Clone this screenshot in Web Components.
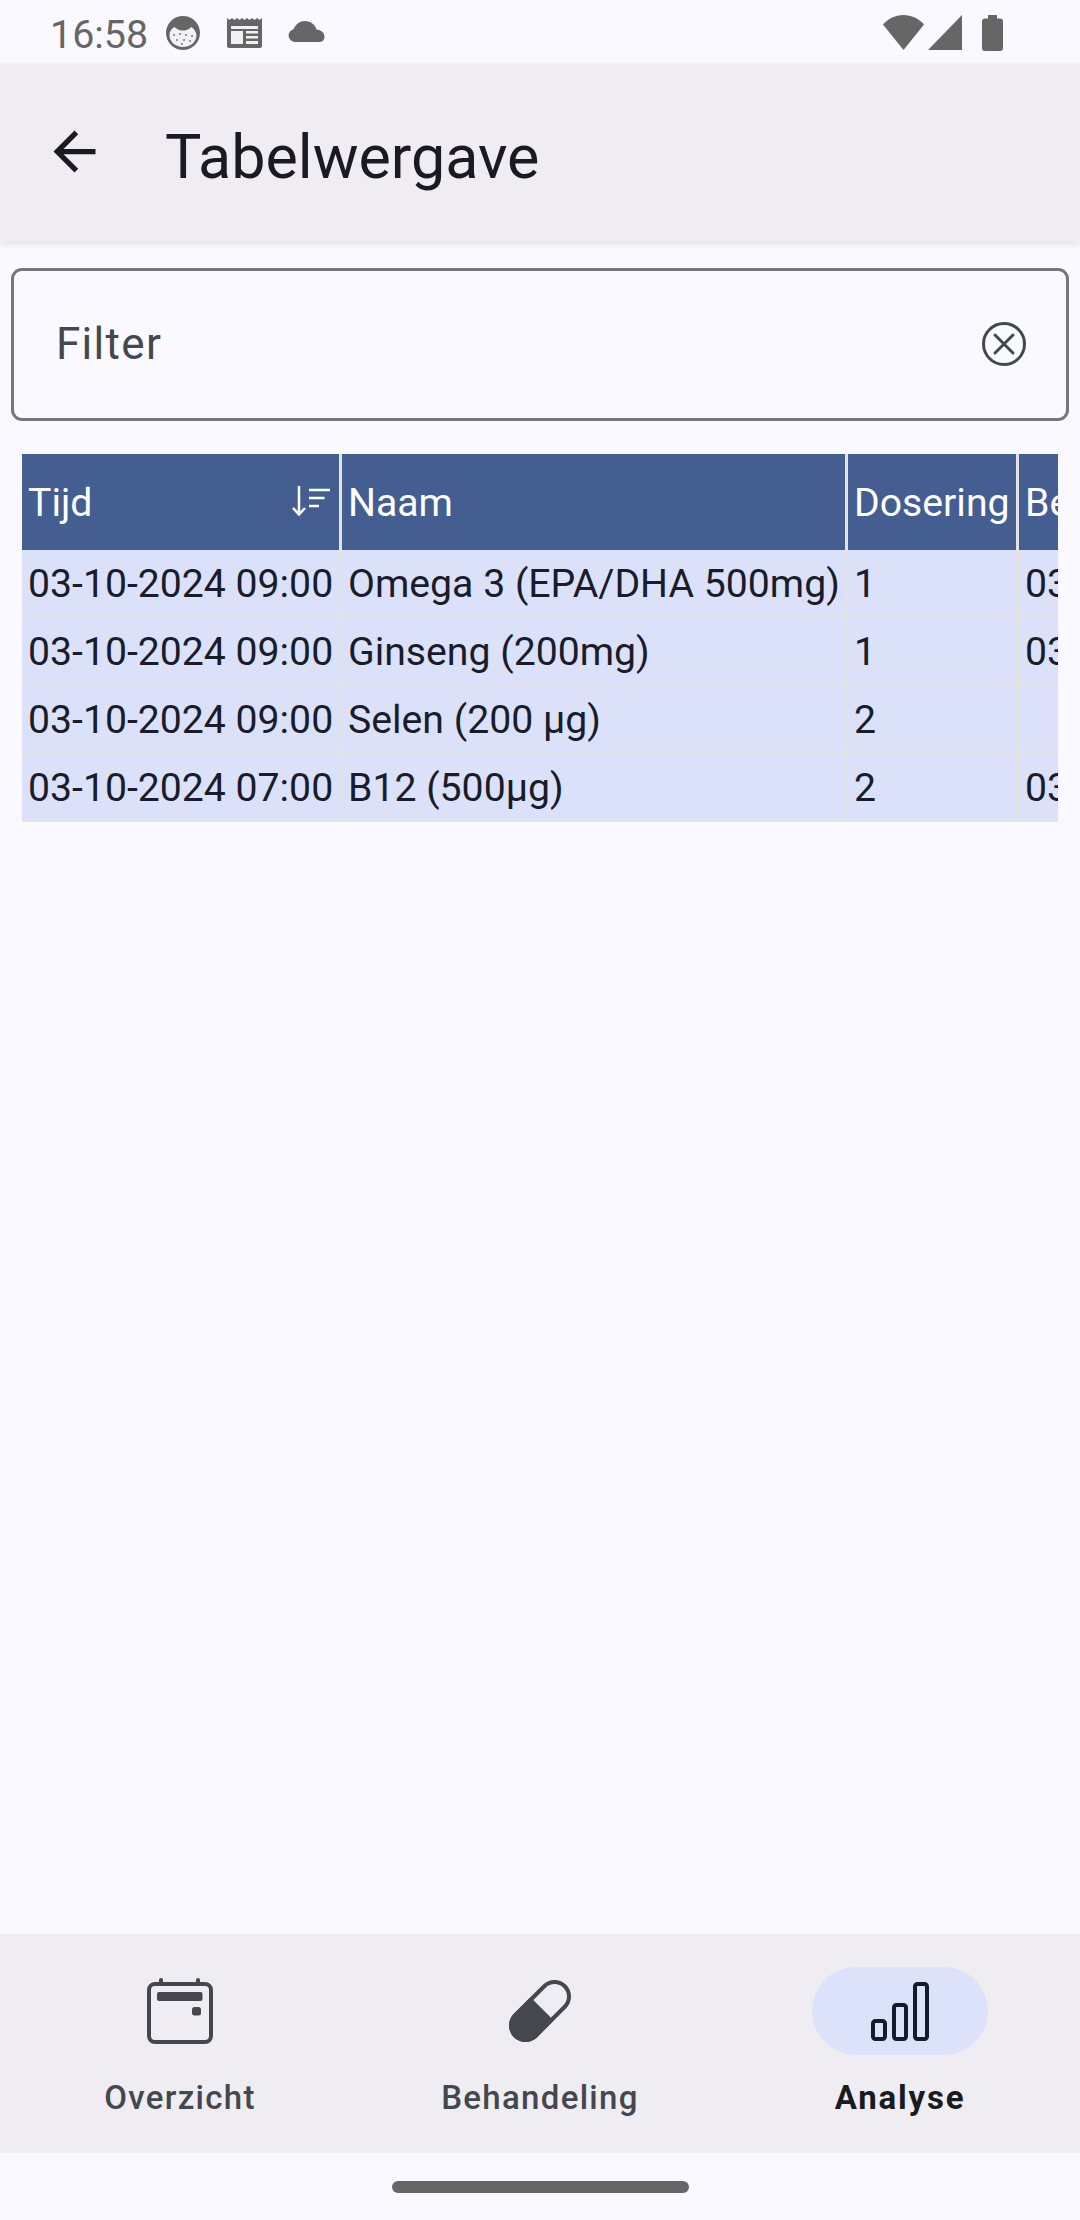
<!DOCTYPE html>
<html lang="nl">
<head>
<meta charset="utf-8">
<title>Tabelwergave</title>
<style>
  html, body { margin: 0; height: 100%; background: #faf9ff; }
  body { font-family: Roboto, "Noto Sans", sans-serif; display: flex; flex-direction: column; height: 2220px; overflow: hidden; }
</style>
</head>
<body>
<status-bar></status-bar>
<app-bar>Tabelwergave</app-bar>
<filter-field>Filter</filter-field>
<data-table></data-table>
<nav-bar>
  <nav-item label="Overzicht" icon="calendar"></nav-item>
  <nav-item label="Behandeling" icon="pill"></nav-item>
  <nav-item label="Analyse" icon="bars" active></nav-item>
</nav-bar>
<gesture-bar></gesture-bar>

<script>
class StatusBar extends HTMLElement {
  constructor () {
    super()
    this.attachShadow({ mode: 'open' })
  }

  connectedCallback () {
    this.shadowRoot.innerHTML = /* html */`
    <style>
      :host {
        display: flex;
        align-items: center;
        height: 65px;
        padding: 0 77px 0 50px;
        color: #666;
        box-sizing: border-box;
        flex: none;
      }
      .time { font-size: 39.400px; line-height: 65px; width: 116px; margin-top: 4px; }
      svg { display: block; fill: #666; flex: none; }
      .right { margin-left: auto; display: flex; align-items: center; }
    </style>
    <span class="time">16:58</span>
    <svg width="34" height="34" viewBox="0 0 34 34">
      <circle cx="17" cy="17" r="17"/>
      <path d="M3.500 19c0-3 1.500-6 4.500-8l2.500 1.500c2 1.500 4 2 6.500 2s4.500-.5 6.500-2L25.500 11c3 2 4.500 5 5 8 0 7-6 12-13.500 12S3.500 26 3.500 19z" fill="#f2f1f6"/>
      <g fill="#777"><circle cx="8" cy="19" r="1"/><circle cx="14" cy="18" r="1"/><circle cx="20" cy="19" r="1"/><circle cx="26" cy="20" r="1"/><circle cx="11" cy="24" r="1"/><circle cx="18" cy="24" r="1"/><circle cx="24" cy="25" r="1"/><circle cx="16" cy="28" r="1"/></g>
    </svg>
    <svg width="35" height="32" viewBox="0 0 35 32" style="margin-left:27px">
      <path d="M0 1l2.500 2L5 1l2.500 2L10 1l2.500 2L15 1l2.500 2L20 1l2.500 2L25 1l2.500 2L30 1l2.500 2L35 1v28a2 2 0 0 1-2 2H2a2 2 0 0 1-2-2z"/>
      <path d="M4 9h27v3H4zM4 14h12v13H4zM19 14h12v2.500H19zM19 19h12v2.500H19zM19 24h12v3H19z" fill="#f2f1f6"/>
    </svg>
    <svg width="38" height="22" viewBox="0 0 38 22" style="margin-left:25px;margin-top:-2px">
      <path d="M8 21a6.500 6.500 0 0 1-1.500-12.800C8.500 3.500 13 0 18 0c5.500 0 10 3.500 11.500 8.500 4.500.5 8 3 8 7.500 0 3-2.500 5-5.500 5z"/>
    </svg>
    <div class="right">
      <svg width="41" height="35" viewBox="0 0 41 35"><path d="M20.500 35L0 9.500C5.500 3.500 12.500 0 20.500 0S35.500 3.500 41 9.500z"/></svg>
      <svg width="35" height="35" viewBox="0 0 35 35" style="margin-left:4px"><path d="M34 0v35H0z"/></svg>
      <svg width="21" height="36" viewBox="0 0 21 36" style="margin-left:19px"><path d="M6 0h9v3.500h3a3 3 0 0 1 3 3V33a3 3 0 0 1-3 3H3a3 3 0 0 1-3-3V6.500a3 3 0 0 1 3-3h3z"/></svg>
    </div>
    `
  }
}

class AppBar extends HTMLElement {
  constructor () {
    super()
    this.attachShadow({ mode: 'open' })
  }

  connectedCallback () {
    this.shadowRoot.innerHTML = /* html */`
    <style>
      :host {
        display: flex;
        align-items: center;
        flex: none;
        height: 177px;
        background: #efedf2;
        color: #1a1b20;
        box-shadow: 0 -1px 3px rgba(0,0,0,.08), 0 3px 6px rgba(0,0,0,.08);
        position: relative;
      }
      svg { margin: 0 0 4px 43px; fill: #1a1b20; display: block; flex: none; }
      .title { margin: 7px 0 0 59px; font-size: 61px; line-height: 74px; }
    </style>
    <svg width="63" height="63" viewBox="0 0 24 24"><path d="M20 11H7.830l5.590-5.590L12 4l-8 8 8 8 1.410-1.410L7.830 13H20z"/></svg>
    <span class="title"><slot></slot></span>
    `
  }
}

class FilterField extends HTMLElement {
  constructor () {
    super()
    this.attachShadow({ mode: 'open' })
  }

  connectedCallback () {
    this.shadowRoot.innerHTML = /* html */`
    <style>
      :host {
        display: flex;
        align-items: center;
        flex: none;
        box-sizing: border-box;
        height: 153px;
        margin: 26px 11px 0;
        padding: 0 40px 0 42px;
        border: 3px solid #74777f;
        border-radius: 11px;
        color: #44474e;
        font-size: 44px;
        letter-spacing: 1.300px;
      }
      span { flex: 1; margin-bottom: 1px; }
      svg { display: block; flex: none; margin-bottom: 2px; }
    </style>
    <span><slot></slot></span>
    <svg width="44" height="44" viewBox="0 0 44 44" fill="none" stroke="#44474e" stroke-width="3">
      <circle cx="22" cy="22" r="20.500"/>
      <path d="M13 13l18 18M31 13L13 31" stroke-linecap="round"/>
    </svg>
    `
  }
}

const rows = [
  ['03-10-2024 09:00', 'Omega 3 (EPA/DHA 500mg)', '1', '03-10-2024 09:00'],
  ['03-10-2024 09:00', 'Ginseng (200mg)', '1', '03-10-2024 09:00'],
  ['03-10-2024 09:00', 'Selen (200 µg)', '2', ''],
  ['03-10-2024 07:00', 'B12 (500µg)', '2', '03-10-2024 07:00']
]

class DataTable extends HTMLElement {
  constructor () {
    super()
    this.attachShadow({ mode: 'open' })
  }

  connectedCallback () {
    const body = rows.map(r => r.map(c => `<div class="cell">${c}</div>`).join('')).join('')
    this.shadowRoot.innerHTML = /* html */`
    <style>
      :host {
        display: block;
        flex: none;
        margin: 33px 22px 0;
        overflow: hidden;
        font-size: 39.200px;
      }
      .grid {
        display: grid;
        grid-template-columns: 320px 506px 171px 400px;
        grid-template-rows: 96px repeat(4, 68px);
        width: 1397px;
      }
      .head {
        display: flex;
        align-items: center;
        box-sizing: border-box;
        background: #445e91;
        color: #fff;
        padding: 2px 6px 0;
        border-right: 3px solid #e3e3e6;
        position: relative;
      }
      .head svg { position: absolute; right: 8px; top: 32px; }
      .cell {
        box-sizing: border-box;
        background: #dbe1f9;
        color: #181c2b;
        padding: 2px 6px 0;
        line-height: 65px;
        border-right: 3px solid #e3e3e6;
        border-bottom: 3px solid #e3e3e6;
        white-space: nowrap;
      }
    </style>
    <div class="grid">
      <div class="head">Tijd
        <svg width="40" height="30" viewBox="0 0 40 30" fill="none" stroke="#fff" stroke-width="2.500">
          <path d="M8 0v28M2 22l6 6.500 6-6.500M18 4h21M18 12h15.500M18 20h10"/>
        </svg>
      </div>
      <div class="head">Naam</div>
      <div class="head">Dosering</div>
      <div class="head">Bewerkt</div>
      ${body}
    </div>
    `
  }
}

const navIcons = {
  calendar: `<svg width="66" height="66" viewBox="0 0 66 66" fill="none">
      <path d="M14 6V2M51 6V2" stroke="#44474e" stroke-width="4" stroke-linecap="round"/>
      <rect x="2" y="6" width="62" height="58" rx="6" stroke="#44474e" stroke-width="4"/>
      <rect x="10" y="14" width="45.500" height="9" rx="2" fill="#44474e"/>
      <rect x="45" y="29" width="9" height="8.500" rx="2.500" fill="#44474e"/>
    </svg>`,
  pill: `<svg width="66" height="66" viewBox="0 0 66 66">
      <g transform="rotate(45 33 33)">
        <rect x="18.500" y="-2" width="29" height="70" rx="14.500" fill="none" stroke="#44474e" stroke-width="4"/>
        <path d="M16.500 30h33v23.500a16.500 16.500 0 0 1-33 0z" fill="#44474e"/>
      </g>
    </svg>`,
  bars: `<svg width="60" height="59" viewBox="0 0 60 59" fill="none" stroke="#131c2b" stroke-width="4">
      <rect x="3" y="39" width="12" height="18" rx="2.500"/>
      <rect x="24" y="23" width="12" height="34" rx="2.500"/>
      <rect x="45" y="2" width="12" height="55" rx="2.500"/>
    </svg>`
}

class NavBar extends HTMLElement {
  constructor () {
    super()
    this.attachShadow({ mode: 'open' })
  }

  connectedCallback () {
    this.shadowRoot.innerHTML = /* html */`
    <style>
      :host {
        display: grid;
        grid-template-columns: repeat(3, 1fr);
        flex: none;
        height: 219px;
        margin-top: auto;
        background: #efedf2;
      }
    </style>
    <slot></slot>
    `
  }
}

class NavItem extends HTMLElement {
  constructor () {
    super()
    this.attachShadow({ mode: 'open' })
  }

  connectedCallback () {
    const active = this.hasAttribute('active')
    this.shadowRoot.innerHTML = /* html */`
    <style>
      :host {
        display: flex;
        flex-direction: column;
        align-items: center;
        padding-top: 33px;
        color: ${active ? '#1a1b20' : '#44474e'};
      }
      .pill {
        display: flex;
        align-items: center;
        justify-content: center;
        width: 176px;
        height: 88px;
        border-radius: 44px;
        background: ${active ? '#dce2f9' : 'transparent'};
      }
      .label {
        margin-top: 22px;
        font-size: 33px;
        line-height: 42px;
        letter-spacing: ${active ? 1.8 : 1.31}px;
        font-weight: ${active ? 700 : 500};
      }
      svg { display: block; }
    </style>
    <div class="pill">${navIcons[this.getAttribute('icon')]}</div>
    <span class="label">${this.getAttribute('label')}</span>
    `
  }
}

class GestureBar extends HTMLElement {
  constructor () {
    super()
    this.attachShadow({ mode: 'open' })
  }

  connectedCallback () {
    this.shadowRoot.innerHTML = /* html */`
    <style>
      :host {
        display: flex;
        justify-content: center;
        align-items: flex-start;
        flex: none;
        height: 67px;
        padding-top: 28px;
        box-sizing: border-box;
      }
      div { width: 297px; height: 12px; border-radius: 6px; background: #666; }
    </style>
    <div></div>
    `
  }
}

customElements.define('status-bar', StatusBar)
customElements.define('app-bar', AppBar)
customElements.define('filter-field', FilterField)
customElements.define('data-table', DataTable)
customElements.define('nav-bar', NavBar)
customElements.define('nav-item', NavItem)
customElements.define('gesture-bar', GestureBar)
</script>
</body>
</html>
